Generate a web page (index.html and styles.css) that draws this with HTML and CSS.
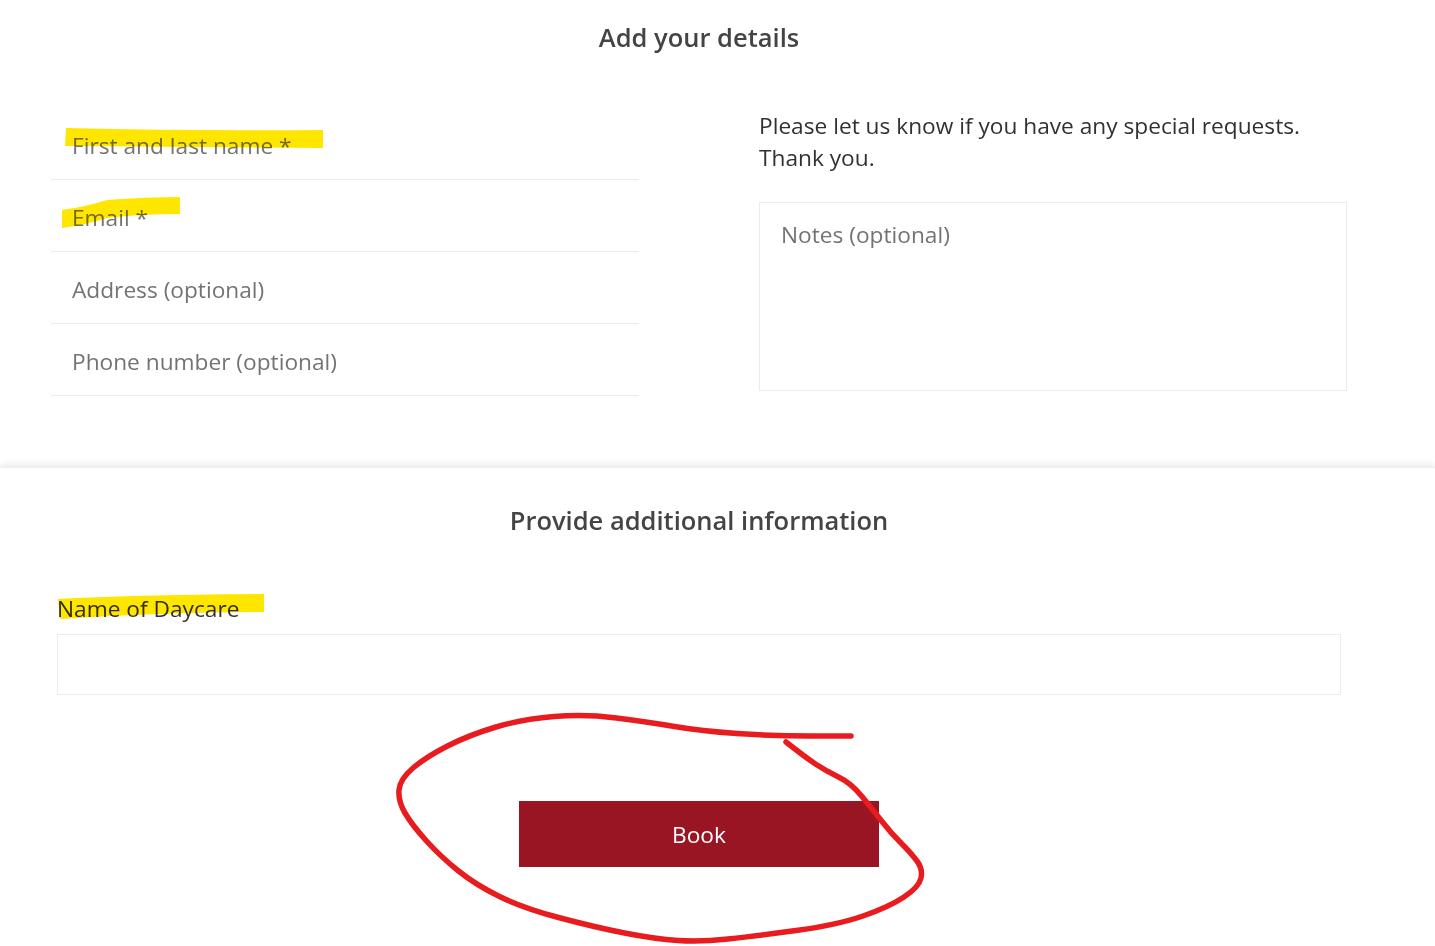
FILE: index.html
```html
<!DOCTYPE html>
<html lang="en">
<head>
    <meta charset="UTF-8">
    <meta name="viewport" content="width=device-width, initial-scale=1.0">
    <title>Add your details</title>
    <link rel="stylesheet" href="styles.css">
</head>
<body>
    <div class="page">
        <section class="details">
            <h2 class="heading">Add your details</h2>
            <div class="details-grid">
                <div class="fields">
                    <input class="line-input" type="text" placeholder="First and last name *">
                    <input class="line-input" type="text" placeholder="Email *">
                    <input class="line-input" type="text" placeholder="Address (optional)">
                    <input class="line-input" type="text" placeholder="Phone number (optional)">
                </div>
                <div class="notes">
                    <p class="notes-text">Please let us know if you have any special requests.<br>Thank you.</p>
                    <textarea class="notes-input" placeholder="Notes (optional)"></textarea>
                </div>
            </div>
        </section>

        <section class="additional">
            <h2 class="heading">Provide additional information</h2>
            <label class="field-label" for="daycare">Name of Daycare</label>
            <input class="box-input" id="daycare" type="text">
            <div class="actions">
                <button class="book-btn" type="button">Book</button>
            </div>
        </section>

        <!-- hand drawn marks on top of the screenshot -->
        <svg class="marks" width="1435" height="946" viewBox="0 0 1435 946">
            <path class="mark-yellow" d="M66 128 Q190 131 323 130 L323 148 Q190 147 65 146 Z"/>
            <path class="mark-yellow" d="M62 210 Q85 207 107 200 Q145 197 180 197 L180 214 Q140 214 107 218 Q85 225 62 228 Z"/>
            <path class="mark-yellow" d="M58 599 Q130 595 264 594 L264 612 Q165 612 60 619 Z"/>
            <path class="mark-red" d="M851 736 L812 736 Q773 736 737 733.5 Q701 731 674.5 726.5 Q648 722 616.5 718 Q585 714 554 716.5 Q523 719 496 727 Q469 735 447.5 746 Q426 757 413 768 Q400 779 399 790 Q398 801 405 813 Q412 825 426.5 841 Q441 857 458.5 871 Q476 885 499.5 896.5 Q523 908 558.5 917.5 Q594 927 624.5 933 Q655 939 678 940.5 Q701 942 728 939 Q755 936 796 930.5 Q837 925 863 916 Q889 907 904 897 Q919 887 921 878 Q923 869 917 861 Q911 853 901 843 Q891 833 882 821.5 Q873 810 862 796.5 Q851 783 838.5 777 Q826 771 815.5 764 Q805 757 786 742"/>
        </svg>
    </div>
</body>
</html>
```

FILE: styles.css
```css
* {
    box-sizing: border-box;
}

html, body {
    margin: 0;
    height: 946px;
    overflow: hidden;
    background-color: #fff;
}

body {
    font-family: "Open Sans", "Noto Sans", sans-serif;
    color: #323130;
}

.page {
    position: relative;
    width: 1435px;
    height: 946px;
}

.heading {
    margin: 0;
    font-size: 25.5px;
    line-height: 34px;
    font-weight: 600;
    color: #444;
    text-align: center;
}

.details {
    height: 467px;
    padding: 20px 88px 0 51px;
}

.details-grid {
    display: grid;
    grid-template-columns: 588px 588px;
    column-gap: 120px;
    margin-top: 54px;
}

.line-input {
    display: block;
    width: 100%;
    height: 72px;
    padding: 4px 21px 0;
    border: 0;
    border-bottom: 1px solid #edebe9;
    outline: 0;
    font: inherit;
    font-size: 22.7px;
    background: transparent;
}

.line-input::placeholder,
.notes-input::placeholder {
    color: #737373;
    opacity: 1;
}

.notes-text {
    margin: 2px 0 28px;
    font-size: 22.7px;
    line-height: 32px;
}

.notes-input {
    display: block;
    width: 100%;
    height: 189px;
    padding: 16px 21px;
    border: 1px solid #edebe9;
    outline: 0;
    resize: none;
    font: inherit;
    font-size: 22.7px;
    line-height: 32px;
}

.additional {
    height: 479px;
    padding: 35px 94px 0 57px;
    border-top: 1px solid #eee;
    box-shadow: 0 -3px 6px rgba(0, 0, 0, 0.08);
}

.field-label {
    display: block;
    margin-top: 56px;
    font-size: 22.7px;
    line-height: 32px;
}

.box-input {
    display: block;
    width: 100%;
    height: 61px;
    margin-top: 9px;
    border: 1px solid #edebe9;
    outline: 0;
}

.actions {
    display: flex;
    justify-content: center;
    margin-top: 106px;
}

.book-btn {
    width: 360px;
    height: 66px;
    padding-top: 2px;
    border: 0;
    background-color: #9a1524;
    color: #fff;
    font: inherit;
    font-size: 22.7px;
}

.marks {
    position: absolute;
    top: 0;
    left: 0;
    pointer-events: none;
}

.mark-yellow {
    fill: #ffe600;
    mix-blend-mode: multiply;
}

.mark-red {
    fill: none;
    stroke: #e81c1f;
    stroke-width: 5.5;
    stroke-linecap: round;
    stroke-linejoin: round;
}
```
